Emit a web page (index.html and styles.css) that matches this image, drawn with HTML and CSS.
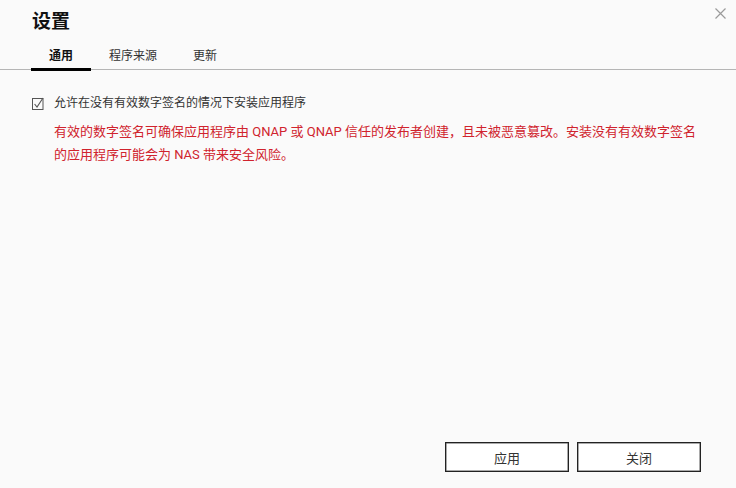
FILE: index.html
```html
<!DOCTYPE html>
<html lang="zh-CN">
<head>
<meta charset="utf-8">
<title>设置</title>
<link rel="stylesheet" href="styles.css">
</head>
<body>
<div class="dialog">
  <header class="header">
    <h1 class="title">设置</h1>
    <button class="close" aria-label="关闭">
      <svg width="11" height="11" viewBox="0 0 11 11"><path d="M0.5 0.5 L10.5 10.5 M10.5 0.5 L0.5 10.5" stroke="#9a9a9a" stroke-width="1.2" fill="none"/></svg>
    </button>
  </header>
  <nav class="tabs">
    <span class="tab active">通用</span>
    <span class="tab">程序来源</span>
    <span class="tab">更新</span>
  </nav>
  <main class="content">
    <label class="check-row">
      <span class="checkbox">
        <svg width="12" height="13" viewBox="0 0 12 13"><rect x="0.5" y="1.5" width="10.5" height="11" fill="none" stroke="#555" stroke-width="1"/><path d="M2.6 7 L5 10 L11 1" fill="none" stroke="#555" stroke-width="1.1"/></svg>
      </span>
      <span class="check-label">允许在没有有效数字签名的情况下安装应用程序</span>
    </label>
    <p class="warning">有效的数字签名可确保应用程序由 QNAP 或 QNAP 信任的发布者创建，且未被恶意篡改。安装没有有效数字签名的应用程序可能会为 NAS 带来安全风险。</p>
  </main>
  <footer class="footer">
    <button class="btn">应用</button>
    <button class="btn">关闭</button>
  </footer>
</div>
</body>
</html>
```
FILE: styles.css
```css
html, body {
  margin: 0;
  padding: 0;
  background: #fafafa;
}
body {
  font-family: Roboto, "Noto Sans CJK SC", sans-serif;
  color: #333;
}
.dialog {
  height: 488px;
  display: flex;
  flex-direction: column;
  box-sizing: border-box;
}
.header {
  display: flex;
  justify-content: space-between;
  align-items: flex-start;
  padding: 0 10px 0 32px;
  height: 44px;
}
.title {
  margin: 0;
  padding-top: 9px;
  font-size: 19px;
  line-height: 26px;
  font-weight: 700;
  color: #111;
}
.close {
  border: 0;
  background: none;
  padding: 0;
  margin-top: 8px;
  width: 11px;
  height: 11px;
  display: flex;
}
.tabs {
  display: flex;
  padding-left: 31px;
  border-bottom: 1px solid #b5b5b5;
  height: 26px;
  box-sizing: border-box;
}
.tab {
  padding: 3px 18px 0;
  font-size: 12px;
  line-height: 18px;
  color: #333;
  position: relative;
}
.tab.active {
  font-weight: 700;
  color: #111;
}
.tab.active::after {
  content: "";
  position: absolute;
  left: 0;
  right: 0;
  bottom: -2px;
  height: 3px;
  background: #000;
}
.content {
  flex: 1;
  padding: 23px 36px 0 32px;
}
.check-row {
  display: flex;
  align-items: center;
  gap: 10px;
  height: 20px;
}
.checkbox {
  display: flex;
}
.check-label {
  font-size: 12px;
  line-height: 20px;
  color: #333;
}
.warning {
  margin: 7px 0 0 22px;
  font-size: 13px;
  line-height: 23px;
  color: #d0232d;
}
.footer {
  display: flex;
  justify-content: flex-end;
  gap: 8px;
  padding: 0 35px 16px 0;
}
.btn {
  width: 124px;
  height: 30px;
  background: #fff;
  border: 1px solid #222;
  box-shadow: inset 0 0 0 0.5px #555;
  font-family: Roboto, "Noto Sans CJK SC", sans-serif;
  font-size: 13px;
  color: #333;
  padding: 0;
}
```
